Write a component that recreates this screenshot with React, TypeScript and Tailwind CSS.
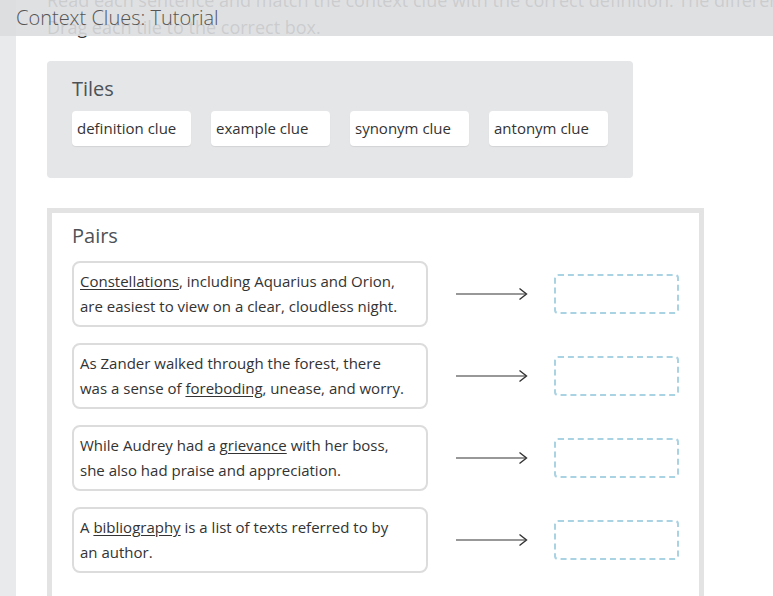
import React from 'react';

const tiles = ['definition clue', 'example clue', 'synonym clue', 'antonym clue'];

const pairs: { before: string; word: string; after: string }[] = [
  { before: '', word: 'Constellations', after: ', including Aquarius and Orion, are easiest to view on a clear, cloudless night.' },
  { before: 'As Zander walked through the forest, there was a sense of ', word: 'foreboding', after: ', unease, and worry.' },
  { before: 'While Audrey had a ', word: 'grievance', after: ' with her boss, she also had praise and appreciation.' },
  { before: 'A ', word: 'bibliography', after: ' is a list of texts referred to by an author.' },
];

function Arrow() {
  return (
    <svg width="72" height="14" viewBox="0 0 72 14" className="shrink-0">
      <line x1="0" y1="7" x2="70" y2="7" stroke="#333" strokeWidth="1.2" />
      <polyline points="63.5,1.5 70.5,7 63.5,12.5" fill="none" stroke="#333" strokeWidth="1.4" />
    </svg>
  );
}

export default function App() {
  return (
    <div className="relative flex h-[596px] w-full overflow-hidden bg-white font-['Open_Sans',sans-serif] text-[#333]">
      <div className="w-4 shrink-0 bg-[#e9eaeb]" />
      <div className="flex-1 pl-[31px]">
        <div className="-mt-[13px] text-[18px] leading-[27px] text-[#333]">
          <p className="whitespace-nowrap">Read each sentence and match the context clue with the correct definition. The different kinds are explained.</p>
          <p className="whitespace-nowrap">Drag each tile to the correct box.</p>
        </div>

        <div className="mt-5 h-[117px] w-[586px] rounded bg-[#e5e6e7] pl-[25px] pt-[14px]">
          <h2 className="text-[20px] leading-[28px] text-[#4d5257]">Tiles</h2>
          <div className="mt-2 flex gap-5">
            {tiles.map((t) => (
              <div key={t} className="flex h-[35px] w-[119px] items-center rounded bg-white px-[5px] text-[15px] shadow-[0_1px_1px_rgba(0,0,0,0.08)]">
                {t}
              </div>
            ))}
          </div>
        </div>

        <div className="mt-[30px] w-[657px] border-[5px] border-[#e3e3e3] bg-white pl-5 pt-[9px] pb-6">
          <h2 className="text-[20px] leading-[28px] text-[#4d5257]">Pairs</h2>
          <div className="mt-[11px] flex flex-col gap-4">
            {pairs.map((p) => (
              <div key={p.word} className="flex items-center">
                <div className="h-[66px] w-[356px] rounded-lg border-2 border-[#dcdcdc] py-[6px] pl-[6px] pr-[20px] text-[15px] leading-[25px]">
                  {p.before}
                  <span className="underline underline-offset-2">{p.word}</span>
                  {p.after}
                </div>
                <div className="ml-[28px]">
                  <Arrow />
                </div>
                <div className="ml-[26px] h-10 w-[125px] rounded border-2 border-dashed border-[#a9d2e3]" />
              </div>
            ))}
          </div>
        </div>
      </div>

      <div className="absolute left-0 right-0 top-0 flex h-9 items-center bg-[#dcdddf]/[0.9] pl-4">
        <span className="text-[20px] font-light leading-none text-[#555]">Context Clues: Tutorial</span>
      </div>
    </div>
  );
}
